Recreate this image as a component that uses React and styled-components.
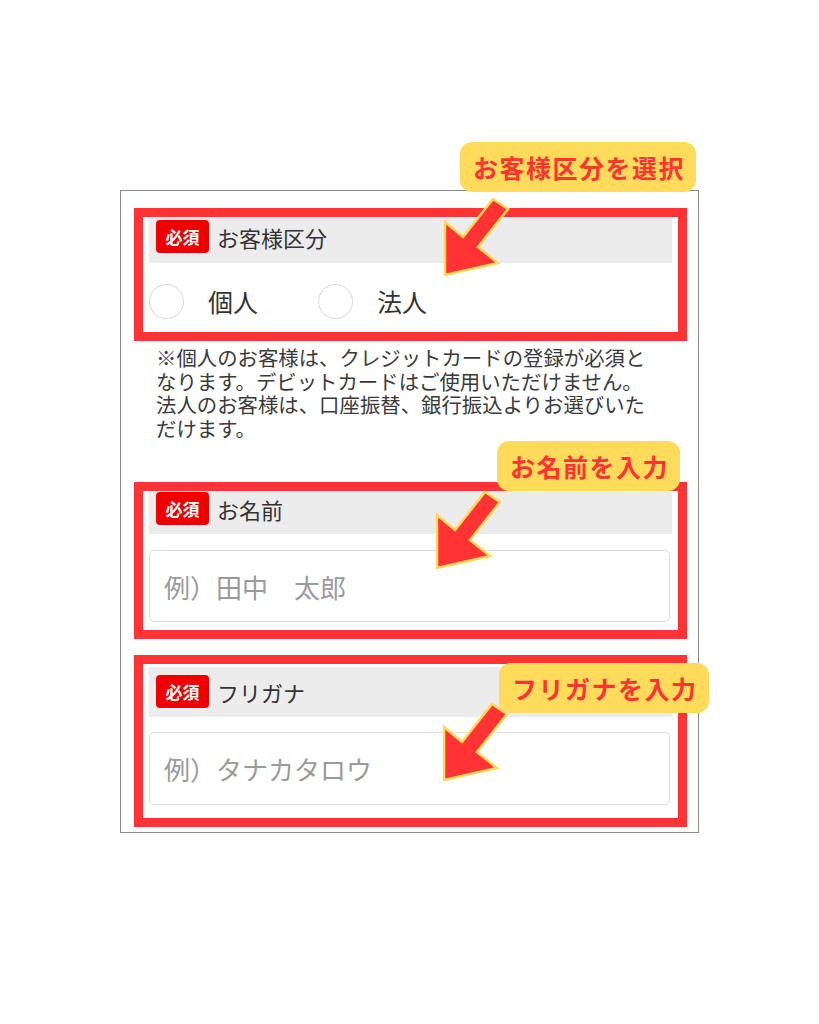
import React from "react";
import styled, { createGlobalStyle } from "styled-components";

const GlobalStyle = createGlobalStyle`
  body {
    margin: 0;
    background: #fff;
    font-family: "Noto Sans CJK JP", "Noto Sans", sans-serif;
  }
`

const Page = styled.div`
  padding: 190px 0 0 120px;
  height: 1024px;
  box-sizing: border-box;
`

const Card = styled.div`
  width: 579px;
  box-sizing: border-box;
  border: 1px solid #8a8a8a;
  padding: 17px 11px 5px 13px;
  position: relative;
`

const Section = styled.div`
  position: relative;
  border: 9px solid #ff3333;
  padding: ${(p) => p.$pt || 0}px 6px ${(p) => p.$pb || 0}px 6px;
  margin-top: ${(p) => p.$mt || 0}px;
`

const Header = styled.div`
  height: ${(p) => p.$h}px;
  padding: ${(p) => p.$pt}px 7px 0;
  box-sizing: border-box;
  background: #ececec;
`

const HeaderRow = styled.div`
  display: flex;
  align-items: center;
  gap: 8px;
  height: 33px;
`

const Badge = styled.span`
  display: inline-flex;
  align-items: center;
  justify-content: center;
  width: 53px;
  height: 33px;
  border-radius: 4px;
  background: #ee0000;
  color: #fff;
  font-size: 17px;
  font-weight: 700;
`

const Label = styled.span`
  font-size: 22px;
  color: #333;
`

const RadioRow = styled.div`
  display: flex;
  align-items: center;
  height: 69px;
  padding-top: 7px;
  box-sizing: border-box;
`

const RadioOption = styled.label`
  display: flex;
  align-items: center;
  gap: 24px;
  margin-right: 60px;
  font-size: 25px;
  color: #333;
`

const Circle = styled.span`
  width: 35px;
  height: 35px;
  box-sizing: border-box;
  border-radius: 50%;
  border: 1.5px solid #d8d8d8;
  background: #fff;
`

const Input = styled.div`
  margin: ${(p) => p.$mt}px 2px 0 0;
  height: ${(p) => p.$h}px;
  box-sizing: border-box;
  border: 1.5px solid #dcdcdc;
  border-radius: 5px;
  padding-left: 14px;
  display: flex;
  align-items: center;
  font-size: 26px;
  color: #9a9a9a;
`

const Note = styled.p`
  margin: 5px 0 0;
  padding-left: 22px;
  font-size: 20.4px;
  line-height: 23.5px;
  color: #3a3a3a;
`

const Callout = styled.div`
  position: absolute;
  left: ${(p) => p.$x}px;
  top: ${(p) => p.$y}px;
  height: 50px;
  padding: 0 11px 0 13px;
  border-radius: 12px;
  background: #ffdb5c;
  color: #ff3333;
  font-size: 25px;
  font-weight: 700;
  letter-spacing: 1.5px;
  line-height: 50px;
  white-space: nowrap;
  z-index: 2;
`

const ArrowBox = styled.svg`
  position: absolute;
  left: ${(p) => p.$x}px;
  top: ${(p) => p.$y}px;
  z-index: 3;
`

const Arrow = ({ x, y }) => (
  <ArrowBox $x={x} $y={y} width="72" height="84" viewBox="0 0 72 84">
    <polygon
      points="52,4 67,14 37,52 57,68 4,80 4,27 22,42"
      fill="#ff3333"
      stroke="#ffd95a"
      strokeWidth="2.5"
      strokeLinejoin="miter"
    />
  </ArrowBox>
)

const App = () => {
  return (
    <Page>
      <GlobalStyle />
      <Card>
        <Section>
          <Callout $x={317} $y={-75}>お客様区分を選択</Callout>
          <Arrow x={298} y={-22} />
          <Header $h={46} $pt={3}>
            <HeaderRow>
              <Badge>必須</Badge>
              <Label>お客様区分</Label>
            </HeaderRow>
          </Header>
          <RadioRow>
            <RadioOption>
              <Circle />
              個人
            </RadioOption>
            <RadioOption>
              <Circle />
              法人
            </RadioOption>
          </RadioRow>
        </Section>
        <Note>
          ※個人のお客様は、クレジットカードの登録が必須と<br />
          なります。デビットカードはご使用いただけません。<br />
          法人のお客様は、口座振替、銀行振込よりお選びいた<br />
          だけます。
        </Note>
        <Section $mt={42} $pb={8}>
          <Callout $x={354} $y={-50}>お名前を入力</Callout>
          <Arrow x={290} y={-3} />
          <Header $h={43} $pt={1}>
            <HeaderRow>
              <Badge>必須</Badge>
              <Label>お名前</Label>
            </HeaderRow>
          </Header>
          <Input $mt={16} $h={72}>例）田中　太郎</Input>
        </Section>
        <Section $mt={16} $pt={3} $pb={13}>
          <Callout $x={356} $y={-1}>フリガナを入力</Callout>
          <Arrow x={297} y={36} />
          <Header $h={50} $pt={8}>
            <HeaderRow>
              <Badge>必須</Badge>
              <Label>フリガナ</Label>
            </HeaderRow>
          </Header>
          <Input $mt={15} $h={73}>例）タナカタロウ</Input>
        </Section>
      </Card>
    </Page>
  );
}

export default App;
